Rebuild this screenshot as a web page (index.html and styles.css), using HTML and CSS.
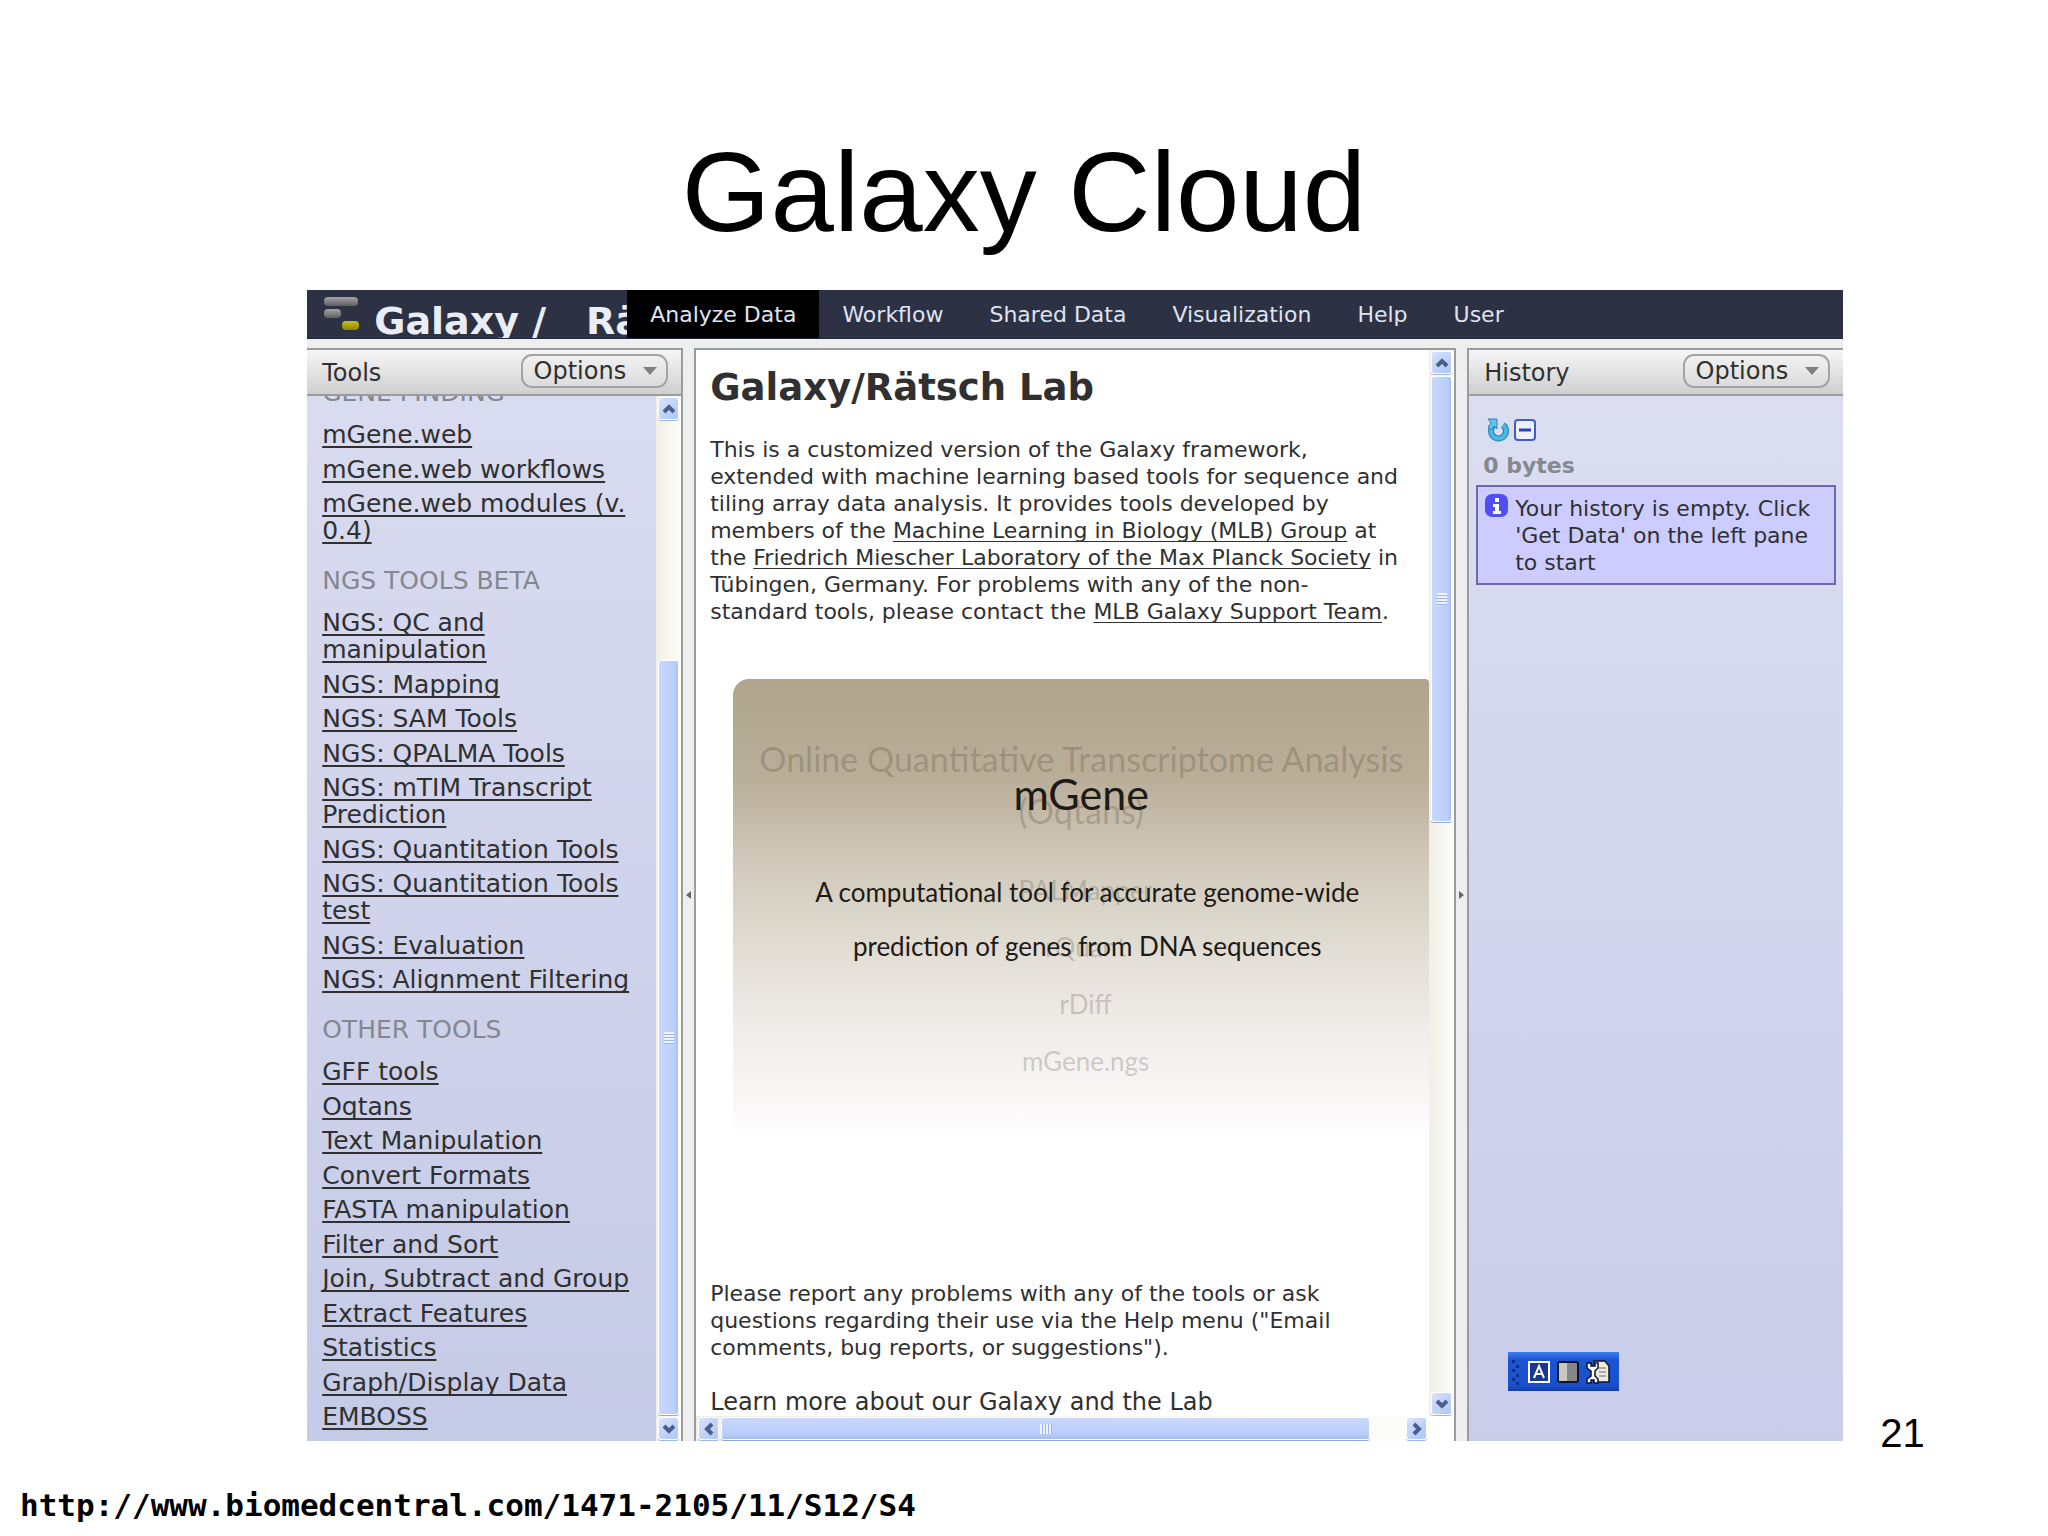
FILE: index.html
```html
<!DOCTYPE html>
<html lang="en">
<head>
<meta charset="utf-8">
<title>Galaxy Cloud</title>
<link rel="stylesheet" href="styles.css">
</head>
<body>
<main class="slide">
  <h1 class="slide-title">Galaxy Cloud</h1>

  <div class="stage">
    <section class="app">
      <header class="masthead">
        <div class="brand">
          <svg class="brand-logo" width="36" height="36" viewBox="0 0 36 36" aria-hidden="true">
            <defs>
              <linearGradient id="bar" x1="0" y1="0" x2="0" y2="1"><stop offset="0" stop-color="#a5a5a5"/><stop offset="1" stop-color="#5e5e60"/></linearGradient>
              <linearGradient id="gold" x1="0" y1="0" x2="0" y2="1"><stop offset="0" stop-color="#c6bd22"/><stop offset="1" stop-color="#8f8600"/></linearGradient>
            </defs>
            <rect x="1" y="1" width="34" height="9" rx="4" fill="url(#bar)"/>
            <rect x="1" y="13" width="17" height="9" rx="4" fill="url(#bar)"/>
            <rect x="19" y="25" width="17" height="9" rx="4" fill="url(#gold)"/>
          </svg>
          <span class="brand-name"><span>Galaxy /</span><span>Rätsch Lab</span></span>
        </div>
        <nav class="menu">
          <a class="active" href="#analyze">Analyze Data</a>
          <a href="#workflow">Workflow</a>
          <a href="#shared">Shared Data</a>
          <a href="#visualization">Visualization</a>
          <a href="#help">Help</a>
          <a href="#user">User</a>
        </nav>
      </header>

      <div class="columns">
        <aside class="panel">
          <div class="panel-head"><h2>Tools</h2><button class="options" type="button">Options</button></div>
          <div class="panel-body">
            <div class="tools">
              <h3 class="cut">GENE FINDING</h3>
              <ul>
                <li><a href="#t1">mGene.web</a></li>
                <li><a href="#t2">mGene.web workflows</a></li>
                <li><a href="#t3">mGene.web modules (v.<br>0.4)</a></li>
              </ul>
              <h3>NGS TOOLS BETA</h3>
              <ul>
                <li><a href="#n1">NGS: QC and<br>manipulation</a></li>
                <li><a href="#n2">NGS: Mapping</a></li>
                <li><a href="#n3">NGS: SAM Tools</a></li>
                <li><a href="#n4">NGS: QPALMA Tools</a></li>
                <li><a href="#n5">NGS: mTIM Transcript<br>Prediction</a></li>
                <li><a href="#n6">NGS: Quantitation Tools</a></li>
                <li><a href="#n7">NGS: Quantitation Tools<br>test</a></li>
                <li><a href="#n8">NGS: Evaluation</a></li>
                <li><a href="#n9">NGS: Alignment Filtering</a></li>
              </ul>
              <h3>OTHER TOOLS</h3>
              <ul>
                <li><a href="#o1">GFF tools</a></li>
                <li><a href="#o2">Oqtans</a></li>
                <li><a href="#o3">Text Manipulation</a></li>
                <li><a href="#o4">Convert Formats</a></li>
                <li><a href="#o5">FASTA manipulation</a></li>
                <li><a href="#o6">Filter and Sort</a></li>
                <li><a href="#o7">Join, Subtract and Group</a></li>
                <li><a href="#o8">Extract Features</a></li>
                <li><a href="#o9">Statistics</a></li>
                <li><a href="#o10">Graph/Display Data</a></li>
                <li><a href="#o11">EMBOSS</a></li>
              </ul>
            </div>
            <div class="scroll">
              <button class="arrow" type="button" aria-label="Scroll up"><svg width="14" height="10" viewBox="0 0 14 10"><path d="M2 8l5-5 5 5"/></svg></button>
              <div class="track track-tools"><div class="thumb"><i class="grip"></i></div></div>
              <button class="arrow" type="button" aria-label="Scroll down"><svg width="14" height="10" viewBox="0 0 14 10"><path d="M2 2l5 5 5-5"/></svg></button>
            </div>
          </div>
        </aside>

        <button class="collapse" type="button" aria-label="Collapse tools"><svg width="7" height="10" viewBox="0 0 7 10"><path d="M6 1v8L1 5z"/></svg></button>

        <section class="center">
          <article class="page">
            <h2 class="page-title">Galaxy/Rätsch Lab</h2>
            <p>This is a customized version of the Galaxy framework,<br>
            extended with machine learning based tools for sequence and<br>
            tiling array data analysis. It provides tools developed by<br>
            members of the <a href="#mlb">Machine Learning in Biology (MLB) Group</a> at<br>
            the <a href="#fml">Friedrich Miescher Laboratory of the Max Planck Society</a> in<br>
            Tübingen, Germany. For problems with any of the non-<br>
            standard tools, please contact the <a href="#support">MLB Galaxy Support Team</a>.</p>
            <div class="gallery">
              <div class="card fading">
                <div class="card-title">Online Quantitative Transcriptome Analysis<br>(Oqtans)</div>
                <div class="card-list"><span>PALMapper</span><span>rQuant</span><span>rDiff</span><span>mGene.ngs</span></div>
              </div>
              <div class="card current">
                <div class="card-title">mGene</div>
                <div class="card-text">A computational tool for accurate genome-wide<br>prediction of genes from DNA sequences</div>
              </div>
            </div>
            <p>Please report any problems with any of the tools or ask<br>
            questions regarding their use via the Help menu ("Email<br>
            comments, bug reports, or suggestions").</p>
            <h3 class="learn">Learn more about our Galaxy and the Lab</h3>
          </article>
          <div class="scroll">
            <button class="arrow" type="button" aria-label="Scroll up"><svg width="14" height="10" viewBox="0 0 14 10"><path d="M2 8l5-5 5 5"/></svg></button>
            <div class="track track-page"><div class="thumb"><i class="grip"></i></div></div>
            <button class="arrow" type="button" aria-label="Scroll down"><svg width="14" height="10" viewBox="0 0 14 10"><path d="M2 2l5 5 5-5"/></svg></button>
          </div>
          <div class="scroll across">
            <button class="arrow" type="button" aria-label="Scroll left"><svg width="10" height="14" viewBox="0 0 10 14"><path d="M8 2L3 7l5 5"/></svg></button>
            <div class="track track-across"><div class="thumb"><i class="grip"></i></div></div>
            <button class="arrow" type="button" aria-label="Scroll right"><svg width="10" height="14" viewBox="0 0 10 14"><path d="M2 2l5 5-5 5"/></svg></button>
          </div>
        </section>

        <button class="collapse" type="button" aria-label="Collapse history"><svg width="7" height="10" viewBox="0 0 7 10"><path d="M1 1v8l5-4z"/></svg></button>

        <aside class="panel history">
          <div class="panel-head"><h2>History</h2><button class="options" type="button">Options</button></div>
          <div class="history-body">
            <div class="history-actions">
              <button type="button" aria-label="Refresh"><svg width="24" height="24" viewBox="0 0 24 24">
                <path d="M17 7a7.500 7.500 0 1 1-9 0" fill="none" stroke="#1d7fae" stroke-width="6"/>
                <path d="M17 7a7.500 7.500 0 1 1-9 0" fill="none" stroke="#4bb8e6" stroke-width="4"/>
                <path d="M2 1h9v10l-3-3-3 4-3-3 3-4z" fill="#62c3ea" stroke="#2a86b6"/>
              </svg></button>
              <button type="button" aria-label="Collapse all"><svg width="22" height="24" viewBox="0 0 22 24">
                <rect x="1" y="2" width="20" height="20" rx="3" fill="#eef1fb" stroke="#3f5fc4" stroke-width="2"/>
                <path d="M5 12h12" stroke="#2545b8" stroke-width="3"/>
              </svg></button>
            </div>
            <div class="size">0 bytes</div>
            <div class="notice">
              <svg width="23" height="23" viewBox="0 0 23 23" aria-hidden="true">
                <rect width="23" height="23" rx="7" fill="#4f4ff5"/>
                <path d="M10 4h4v4h-4zM8 10h6v7h2v3H8v-3h2v-4H8z" fill="#fff"/>
              </svg>
              <span>Your history is empty. Click<br>'Get Data' on the left pane<br>to start</span>
            </div>
          </div>
          <div class="langbar">
            <svg width="10" height="26" viewBox="0 0 10 26" fill="#0c2f8e" aria-hidden="true"><path d="M1 1h3v3H1zM5 6h3v3H5zM1 10h3v3H1zM5 15h3v3H5zM1 19h3v3H1zM5 23h3v3H5z"/></svg>
            <svg width="22" height="22" viewBox="0 0 22 22" aria-hidden="true"><rect x="1" y="1" width="20" height="20" fill="#17398f" stroke="#fff" stroke-width="2"/><path d="M6 17l5-12 5 12M8 13h6" fill="none" stroke="#fff" stroke-width="2"/></svg>
            <svg width="22" height="22" viewBox="0 0 22 22" aria-hidden="true"><rect x="1" y="1" width="20" height="20" rx="2" fill="#85858a" stroke="#0a1530" stroke-width="2"/><path d="M2 2h8v18H2z" fill="#c9c7be"/></svg>
            <svg width="24" height="24" viewBox="0 0 24 24" aria-hidden="true"><path d="M8 1h11l4 5v16H8z" fill="#eceadd" stroke="#0a1530" stroke-width="1.500"/><path d="M13 8h7M13 12h7M13 16h7" stroke="#9a988c" stroke-width="1.500"/><path d="M1 3v5l4 3v5l-4 3v4h4v-3h3v3h4v-4l-3-3v-5l3-3V3H9v3H5V3z" fill="#fff" stroke="#0a1530" stroke-width="1.500"/></svg>
          </div>
        </aside>
      </div>
    </section>
    <div class="page-number">21</div>
  </div>

  <footer class="source">http://www.biomedcentral.com/1471-2105/11/S12/S4</footer>
</main>
</body>
</html>
```
FILE: styles.css
```css
* { box-sizing: border-box; }

body {
  margin: 0;
  background: #fff;
  color: #303030;
  font-family: "DejaVu Sans", Verdana, sans-serif;
  font-size: 22px;
  line-height: 27px;
}

h1, h2, h3, p, ul { margin: 0; padding: 0; font-weight: 400; }
ul { list-style: none; }
a { color: inherit; }
button { margin: 0; padding: 0; border: 0; background: none; font: inherit; color: inherit; }
svg { display: block; flex: none; }

.slide { min-height: 100vh; overflow: hidden; }

.slide-title {
  padding: 126px 0 32px;
  color: #000;
  font: 114px/132px "Liberation Sans", Arial, sans-serif;
  text-align: center;
}

.stage { display: grid; grid-template-columns: 15fr 75fr 10fr; }
.app { grid-column: 2; min-width: 0; background: #eeeeee; }

.page-number {
  align-self: end;
  margin-bottom: -12px;
  padding-left: 37px;
  color: #000;
  font: 40px/40px "Liberation Sans", Arial, sans-serif;
}

.source {
  padding: 44px 20px 0;
  color: #000;
  font: bold 31px/40px "DejaVu Sans Mono", Consolas, monospace;
}

/* Masthead */
.masthead {
  display: flex;
  height: 49px;
  background: #2c3143;
  border-bottom: 1px solid #23283a;
  overflow: hidden;
}
.brand {
  display: flex;
  flex: none;
  gap: 15px;
  width: 320px;
  padding: 6px 0 0 16px;
  overflow: hidden;
}
.brand-name {
  display: flex;
  gap: 40px;
  color: #e9eef6;
  font-weight: bold;
  font-size: 38px;
  line-height: 50px;
  white-space: nowrap;
}
.menu { display: flex; }
.menu a {
  padding: 0 23px;
  color: #dfe4f2;
  line-height: 50px;
  text-decoration: none;
  white-space: nowrap;
}
.menu .active { background: #000; }

/* Three columns */
.columns {
  display: grid;
  grid-template-columns: 376px 11px minmax(0, 1fr) 11px 376px;
  padding-top: 9px;
}
.collapse { display: flex; align-items: center; justify-content: center; }
.collapse path { fill: #666; }

.panel {
  display: flex;
  flex-direction: column;
  border-top: 2px solid #999b9e;
  border-right: 2px solid #999b9e;
  background: linear-gradient(#dadcf0, #c5cae6);
}
.history { border-right: 0; border-left: 2px solid #999b9e; background: linear-gradient(#dcdef0, #c9cde9); }
.panel-head {
  display: flex;
  flex: none;
  align-items: center;
  justify-content: space-between;
  height: 46px;
  padding: 0 13px 0 15px;
  border-bottom: 2px solid #999b9e;
  background: linear-gradient(#f6f6f6, #cfcfcf);
  font-size: 24px;
}
.panel-head h2 { padding-top: 3px; font-size: 24px; }
.options {
  display: flex;
  align-items: center;
  gap: 17px;
  height: 34px;
  margin-bottom: 2px;
  padding: 0 9px 0 11px;
  border: 2px solid #a3a3a3;
  border-radius: 11px;
  background: linear-gradient(#f0f0f0, #dcdcdc);
}
.options::after {
  content: "";
  border: 7px solid transparent;
  border-top: 8px solid #808080;
  border-bottom: 0;
}
.panel-body { display: grid; grid-template-columns: minmax(0, 1fr) 25px; flex: 1; overflow: hidden; }

.tools { padding-left: 15px; font-size: 25px; white-space: nowrap; }
.tools h3 { margin: 23px 0 15px; color: #85878f; font-size: 25px; line-height: 27px; }
.tools .cut { margin: -17px 0 15px; }
.tools li { margin-bottom: 8px; }
.tools li:nth-child(even) { margin-bottom: 7px; }
.tools a, .page a { text-decoration-thickness: 2px; text-underline-offset: 3px; text-decoration-skip-ink: none; }
.page a { text-decoration-thickness: 1px; }

/* Scrollbars */
.scroll {
  display: flex;
  flex-direction: column;
  gap: 2px;
  padding: 1px 2px;
  background: linear-gradient(90deg, #f1efe6, #fdfdf9);
}
.across { flex-direction: row; }
.arrow {
  display: flex;
  flex: none;
  align-items: center;
  justify-content: center;
  width: 21px;
  height: 23px;
  border: 1px solid #fff;
  border-radius: 3px;
  background: linear-gradient(135deg, #d8e3fd, #adc5f8);
  box-shadow: 0 1px 0 #9db6e6;
}
.arrow path { fill: none; stroke: #4a5f8c; stroke-width: 4; }
.track { display: flex; flex: 1; flex-direction: column; }
.thumb {
  display: flex;
  align-items: center;
  justify-content: center;
  border: 1px solid #fff;
  border-radius: 3px;
  background: linear-gradient(90deg, #c9d7fd, #bacffd 80%, #a9c0f0);
  box-shadow: 0 1px 0 #8ea8dc;
}
.grip { width: 10px; height: 12px; background: repeating-linear-gradient(#eef3ff 0 2px, #9db5ea 2px 3px); }
.track-tools .thumb { height: 76%; margin-top: auto; }
.track-page .thumb { height: 44%; }
.across .track { flex-direction: row; }
.track-across .thumb { width: 95%; background: linear-gradient(#cbd8fd, #b7cbfb 80%, #a3bbee); }
.across .grip { width: 12px; height: 10px; background: repeating-linear-gradient(90deg, #eef3ff 0 2px, #9db5ea 2px 3px); }

/* Centre page */
.center {
  display: grid;
  grid-template-columns: minmax(0, 1fr) 25px;
  grid-template-rows: minmax(0, 1fr) 25px;
  border: 2px solid #999b9e;
  border-bottom: 0;
  background: #fff;
}
.page { padding: 18px 0 0 14px; overflow: hidden; white-space: nowrap; }
.page-title { margin-bottom: 28px; font-weight: bold; font-size: 37px; line-height: 40px; }
.gallery {
  display: grid;
  height: 455px;
  margin: 54px 0 146px 23px;
  border-radius: 16px 4px 0 0;
  background: linear-gradient(#b0a58c, #b9ae98 22%, #cfc6b8 38%, #dad6ca 52%, #e6e1da 64%, #efecea 77%, #f9f6f6 92%, #fefefe);
  font-family: Lato, "Open Sans", sans-serif;
  text-align: center;
}
.card { grid-area: 1 / 1; }
.fading { padding-top: 54px; color: rgba(60, 50, 40, .22); }
.fading .card-title { font-size: 34px; line-height: 52px; }
.card-list { display: flex; flex-direction: column; margin-top: 25px; padding-left: 9px; font-size: 26px; line-height: 57px; }
.current { padding-top: 90px; color: #1e1a16; }
.current .card-title { font-size: 43px; line-height: 50px; }
.card-text { margin-top: 46px; padding-left: 12px; font-size: 26px; line-height: 54px; }
.learn { margin-top: 28px; font-size: 24px; }

/* History */
.history-body { padding: 22px 7px 0; }
.history-actions { display: flex; gap: 4px; height: 24px; padding-left: 10px; }
.size { margin: 10px 0 6px 7px; color: #85888f; font-weight: bold; }
.notice {
  display: flex;
  gap: 7px;
  padding: 7px;
  border: 2px solid #6a6ab4;
  background: #ccccff;
  white-space: nowrap;
}
.langbar {
  display: flex;
  align-items: center;
  gap: 7px;
  align-self: flex-start;
  height: 39px;
  margin: auto 0 50px 39px;
  padding: 0 9px 0 3px;
  background: linear-gradient(#3f7df0, #1c55d2 20%, #1a50cc 85%, #123fa8);
}
.notice span { padding-top: 1px; }
```
